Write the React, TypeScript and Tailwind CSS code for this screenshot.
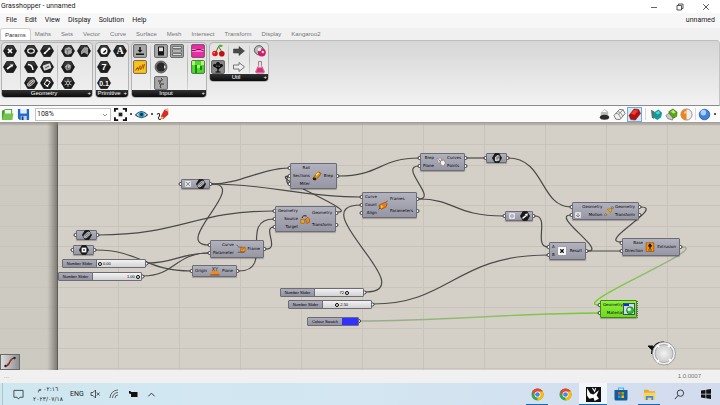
import React, { type ReactNode } from "react";

/* ---------- ribbon ---------- */

function Hex({ label, children }: { label: string; children: ReactNode }) {
  return (
    <button aria-label={label} className="block h-3 w-3.5">
      <svg viewBox="0 0 14 12" className="h-3 w-3.5">
        <path d="M3.8 .4H10.2L13.5 6L10.2 11.6H3.8L.5 6Z" fill="#1d1d1d" stroke="#000" strokeWidth=".7" strokeLinejoin="round" />
        <path d="M4 1H10L12 4.6H2Z" fill="#555" opacity=".45" />
        {children}
      </svg>
    </button>
  );
}

function Tile({ label, bg = "#a8a8a8", children }: { label: string; bg?: string; children: ReactNode }) {
  return (
    <button aria-label={label} className="block h-3 w-3.5">
      <svg viewBox="0 0 14 12" className="h-3 w-3.5 overflow-visible">
        <rect x=".6" y="-.4" width="12.8" height="12.8" rx="1" fill={bg} stroke="#4a4a4a" strokeWidth=".8" />
        {children}
      </svg>
    </button>
  );
}

function Plain({ label, children }: { label: string; children: ReactNode }) {
  return (
    <button aria-label={label} className="block h-3 w-3.5">
      <svg viewBox="0 0 14 12" className="h-3 w-3.5 overflow-visible">{children}</svg>
    </button>
  );
}

const Col = ({ children }: { children: ReactNode }) => <div className="flex flex-col gap-1">{children}</div>;
const Sep = () => <div className="mx-[3px] w-px bg-gradient-to-b from-[#d4d4d4] via-[#b4b4b4] to-[#d4d4d4]" />;

function Panel({ title, children }: { title: string; children: ReactNode }) {
  return (
    <section className="overflow-hidden rounded-sm border border-[#b4b4b4] bg-gradient-to-b from-[#e2e2e2] to-[#f0f0f0]">
      <div className="flex px-px pt-[2px] pb-px">{children}</div>
      <div className="relative h-[7px] bg-gradient-to-b from-[#333] to-[#0c0c0c] pr-[6px] text-center text-[6px] leading-[7px] text-white">
        {title}
        <span className="absolute right-px top-0">+</span>
      </div>
    </section>
  );
}

function Ribbon() {
  return (
    <div className="flex h-[66px] shrink-0 items-start gap-[2px] rounded-tr border-t border-r border-b border-t-[#bdbdbd] border-r-[#c4c4c4] border-b-[#8b8b8b] bg-gradient-to-b from-[#d6d6d6] to-[#f2f2f2] pt-px pl-px">
      <Panel title="Geometry">
        <Col>
          <Hex label="Point"><path d="M5 4L9 8M9 4L5 8" stroke="#fff" strokeWidth="1.6" /></Hex>
          <Hex label="Vector"><path d="M4 8L8 5" stroke="#fff" strokeWidth="1.7" /><path d="M7 3.4L10.4 3.6L9 6.6Z" fill="#fff" /></Hex>
        </Col>
        <Sep />
        <div className="flex gap-[2px]">
          <Col>
            <Hex label="Circle"><ellipse cx="7" cy="6" rx="3.3" ry="2.2" fill="none" stroke="#fff" strokeWidth="1.1" /></Hex>
            <Hex label="Circular Arc"><path d="M4 3.5C7 3.5 8.5 5.5 9 9" stroke="#fff" strokeWidth="1.5" fill="none" /></Hex>
            <Hex label="Curve"><ellipse cx="7" cy="6" rx="4.2" ry="2" transform="rotate(-40 7 6)" fill="#666" stroke="#ddd" strokeWidth=".8" /><path d="M5 8L9 4" stroke="#fff" strokeWidth=".7" /></Hex>
          </Col>
          <Col>
            <Hex label="Line"><path d="M4.5 8.5L9.5 3.5" stroke="#fff" strokeWidth="1.5" /><circle cx="4.7" cy="8.3" r="1" fill="#fff" /><circle cx="9.4" cy="3.6" r="1" fill="#fff" /></Hex>
            <Hex label="Plane"><path d="M3 5L9.5 2.8L11 6.8L4.5 9.2Z" fill="#ccc" stroke="#fff" strokeWidth=".7" /><path d="M5 7L9 5" stroke="#333" strokeWidth=".8" /></Hex>
            <Hex label="Rectangle"><path d="M4 7L7 3.2L10.3 5L7.4 9Z" fill="none" stroke="#fff" strokeWidth="1" /><circle cx="7" cy="3.2" r="1" fill="#fff" /><circle cx="7.4" cy="9" r="1" fill="#fff" /></Hex>
          </Col>
        </div>
        <Sep />
        <div className="flex gap-[2px]">
          <Col>
            <Hex label="Brep"><path d="M4 4L8 2.5L10.3 4V8L6.5 9.6L4 8Z" fill="#aaa" stroke="#ddd" strokeWidth=".6" /><path d="M4 4L6.5 5.4L10.3 4M6.5 5.4V9.6" stroke="#444" strokeWidth=".5" fill="none" /></Hex>
            <Hex label="Mesh"><path d="M3.5 6L7 2.6L10.3 5L9.2 8.4L6 9.8Z" fill="#bbb" /><path d="M3.5 6L9.2 8.4M7 2.6L6 9.8M10.3 5L6 9.8" stroke="#333" strokeWidth=".5" /></Hex>
            <Hex label="Group"><path d="M7 2.2V9.8M3.5 4L10.5 8M10.5 4L3.5 8" stroke="#bbb" strokeWidth=".9" /><circle cx="7" cy="6" r="1.6" fill="#1d1d1d" stroke="#ddd" strokeWidth=".7" /></Hex>
          </Col>
          <Hex label="Geometry"><path d="M4.5 9V6L7.5 2.6L10.6 2.9V9.3L7 7Z" fill="#999" stroke="#ddd" strokeWidth=".5" /></Hex>
        </div>
      </Panel>
      <Panel title="Primitive">
        <div className="flex gap-[2px]">
          <Col>
            <Hex label="Boolean"><circle cx="7" cy="6" r="3.5" fill="#fff" /><path d="M5.6 7.5A2.4 2.4 0 0 0 9 4.5Z" fill="#111" /></Hex>
            <Hex label="Integer"><text x="7" y="9.4" textAnchor="middle" fontSize="9" fontWeight="bold" fontFamily="Liberation Sans, sans-serif" fill="#fff">7</text></Hex>
            <Hex label="Number"><text x="7" y="8.7" textAnchor="middle" fontSize="7" fontWeight="bold" fontFamily="Liberation Sans, sans-serif" fill="#fff">0.1</text></Hex>
          </Col>
          <Hex label="Text"><text x="7" y="9.4" textAnchor="middle" fontSize="10" fontWeight="bold" fontFamily="Liberation Serif, serif" fill="#fff">A</text></Hex>
        </div>
      </Panel>
      <Panel title="Input">
        <Col>
          <Tile label="Button"><path d="M7 2V6" stroke="#111" strokeWidth="1.6" /><path d="M4.7 5H9.3L7 7.8Z" fill="#111" /><path d="M3 9.2H11" stroke="#111" strokeWidth="1.5" /></Tile>
          <Tile label="Graph" bg="#fcc419"><path d="M2.5 9.5L5 6M5 9.5L7.5 4.5M7.5 9L10 3.5M3 7.5L9 7M10 8L11.5 3" stroke="#a85b00" strokeWidth="1.1" /></Tile>
        </Col>
        <Sep />
        <div className="flex gap-[2px]">
          <Col>
            <Tile label="Toggle"><rect x="4" y="1.5" width="6" height="9" fill="#151515" /><rect x="5" y="2.5" width="4" height="3.7" fill="#ddd" /></Tile>
            <Plain label="Control Knob"><circle cx="7" cy="6" r="6" fill="#777" stroke="#333" strokeWidth=".6" /><circle cx="7" cy="6" r="4.5" fill="#292929" /><path d="M10 4L12 6L10 8Z" fill="#ddd" /></Plain>
            <Tile label="Digit Scroller"><path d="M7 1.5C11 3 4 5 6 7S5 9 7 11M4 4H7M7 7H10" stroke="#333" strokeWidth="1" fill="none" /></Tile>
          </Col>
          <Tile label="Value List"><path d="M2.5 2.5H11.5M2.5 6H11.5M2.5 9.5H11.5" stroke="#333" strokeWidth="2.5" /><path d="M3 2.5H11M3 6H11M3 9.5H11" stroke="#ddd" strokeWidth="1.4" /></Tile>
        </div>
        <Sep />
        <Col>
          <Tile label="Gradient" bg="#f02aa4"><rect x="1" y="4" width="12" height="3" fill="#f989ce" /><path d="M1 5.5H4L6 4.5H9L13 6" stroke="#5c0d3e" strokeWidth=".9" fill="none" /></Tile>
          <Tile label="Image Sampler" bg="#4ddb2e"><path d="M1 0H4V4H1ZM10 0H13V4H10ZM5 4H9V7H5Z" fill="#b5f56c" /><path d="M4 4H6V12H4ZM9 5H11V9H9Z" fill="#158a11" /></Tile>
        </Col>
      </Panel>
      <Panel title="Util">
        <Col>
          <Plain label="Cherry Picker"><path d="M5 7L7.5 1.5L11 7" stroke="#397d15" strokeWidth="1" fill="none" /><path d="M7 1.5C8-1 11-.5 12 1C10 2.5 8.5 2 7 1.5Z" fill="#4cae27" /><circle cx="4" cy="8.5" r="2.8" fill="#df1616" /><circle cx="10.8" cy="8.8" r="2.8" fill="#c40d0d" /><circle cx="3.2" cy="7.7" r=".8" fill="#ffb0b0" /></Plain>
          <Tile label="Param Viewer" bg="#8a8a8a"><path d="M7 11V5M7 7.5L3.5 5M7 8L10.5 5M4.5 11H9.5" stroke="#000" strokeWidth="1.2" /><circle cx="7" cy="3" r="2" fill="#111" /><circle cx="3.8" cy="4.5" r="1.7" fill="#111" /><circle cx="10.2" cy="4.5" r="1.7" fill="#111" /></Tile>
        </Col>
        <Sep />
        <Col>
          <Plain label="Data Output"><path d="M1.5 4H7V1.5L12.5 6L7 10.5V8H1.5Z" fill="#4a4a4a" stroke="#333" strokeWidth=".5" /></Plain>
          <Plain label="Data Input"><path d="M1.5 4H7V1.5L12.5 6L7 10.5V8H1.5Z" fill="#eee" stroke="#666" strokeWidth=".9" /></Plain>
        </Col>
        <Sep />
        <Col>
          <Plain label="Jump"><circle cx="6" cy="5.2" r="4.6" fill="#b9b9b9" stroke="#444" strokeWidth=".8" /><circle cx="8.8" cy="7.5" r="4" fill="#c92368" /><circle cx="6.5" cy="4.5" r="1.8" fill="#eee" /><circle cx="9.8" cy="7" r="1.2" fill="#ffd0df" /></Plain>
          <Plain label="Flask"><path d="M5.5 .5H8.5V4.5L11.5 11Q11 12 10 12H4Q3 12 2.5 11L5.5 4.5Z" fill="#f5dce6" stroke="#8d5068" strokeWidth=".7" /><path d="M4.8 6.5H9.2L11.2 11.4H2.9Z" fill="#df2c79" /></Plain>
        </Col>
      </Panel>
    </div>
  );
}

/* ---------- toolbar ---------- */

function ToolButton({ label, active = false, children }: { label: string; active?: boolean; children: ReactNode }) {
  return (
    <button
      aria-label={label}
      className={active ? "flex size-[15px] items-center justify-center border border-[#74a9d8] bg-[#d5e7f6]" : "flex size-[15px] items-center justify-center"}
    >
      <svg viewBox="0 0 14 14" className="size-[13px] shrink-0">{children}</svg>
    </button>
  );
}

const Dot = () => <span className="mx-[2px] size-[2px] shrink-0 rounded-full bg-[#222]" />;

function Toolbar() {
  return (
    <div className="flex h-4 shrink-0 items-center bg-[#fbfbfb]">
      <ToolButton label="Open"><path d="M1 3L5 1H12V13H1Z" fill="#3f9c35" /><path d="M4 2H11V7H4Z" fill="#f0f6ea" /><path d="M1 13L3 6H13.5L12 13Z" fill="#72c64b" /></ToolButton>
      <div className="ml-px"><ToolButton label="Save"><path d="M1 1H13V13H3L1 11Z" fill="#2165cf" /><rect x="3.5" y="1" width="7" height="5" fill="#e5edf8" /><rect x="4" y="8.5" width="6.5" height="4.5" fill="#c0d4f0" /><rect x="5" y="9" width="2" height="4" fill="#153e85" /></ToolButton></div>
      <div className="relative ml-1 h-[13px] w-[76px]">
        <select aria-label="Zoom" className="block h-[13px] w-full appearance-none border border-[#c4c4c4] bg-white py-0 pl-px font-[Roboto,sans-serif] text-[7px] leading-[11px] text-[#222]">
          <option>108%</option>
        </select>
        <svg viewBox="0 0 6 4" className="pointer-events-none absolute right-[3px] top-[5px] h-1 w-1.5"><path d="M1 1L3 3L5 1" stroke="#666" strokeWidth=".7" fill="none" /></svg>
      </div>
      <div className="ml-[2px]"><ToolButton label="Zoom extents"><path d="M1 4V1H4.500M9.500 1H13V4M13 10V13H9.500M4.500 13H1V10" stroke="#111" strokeWidth="2" fill="none" /><rect x="5" y="5" width="4" height="4" fill="#222" /></ToolButton></div>
      <Dot />
      <ToolButton label="Named views"><path d="M.5 7.5Q7 0 13.5 7.5Q7 13.5 .5 7.5Z" fill="#dcecf4" stroke="#244051" strokeWidth="1.1" /><circle cx="7" cy="7" r="3.3" fill="#3098c6" /><circle cx="7" cy="7" r="1.6" fill="#0b2c3d" /></ToolButton>
      <Dot />
      <ToolButton label="Sketch"><path d="M1 7C4 4 5 8 2.500 10.500C3 13.500 5.500 12.500 6 10.500" stroke="#222" strokeWidth="1.1" fill="none" /><path d="M5 9.500L9 2L13 .5L13.300 7L7.500 12Z" fill="#d72e20" /><path d="M9 2L13 .5L13 4Z" fill="#f3b3a4" /><path d="M5 12L6 8.500L8.500 10.500Z" fill="#f4bc5b" /></ToolButton>

      <div className="ml-auto flex items-center pr-[2px]">
        <ToolButton label="No preview"><path d="M3 5L7 1L11 4V8H3Z" fill="#bbb" /><path d="M4.5 4L7 2L9.5 4.5Z" fill="#fff" /><ellipse cx="7" cy="10" rx="5" ry="2.7" fill="#2b2b2b" /></ToolButton>
        <ToolButton label="Wireframe preview"><path d="M1 8L7 1.500L11 2L13 6L7.500 12.500L3 12Z" fill="#f2f2f2" stroke="#666" strokeWidth=".9" /><path d="M3 5.800L6 6.500L8.500 11.300M6 6.500L11 2M4.800 3.900L8 4.800L10.500 9" stroke="#777" strokeWidth=".8" fill="none" /></ToolButton>
        <ToolButton label="Shaded preview" active><path d="M1 8L6.500 1L11.500 1.500L13.500 6L8 13L3 12.500Z" fill="#b30f0f" stroke="#6d0808" strokeWidth=".5" /><path d="M3 6L7 2L11 3L7 7.500Z" fill="#ed3d35" /></ToolButton>
        <div className="mx-[3px] h-3 w-px bg-[#d8d8d8]" />
        <ToolButton label="Document preview"><path d="M1 2L5 4L4 12L2 10Z" fill="#5c6e6d" /><path d="M4 5L9 1.5L13 5L12 10L8 13L4 10.5Z" fill="#119a9b" /><path d="M6 5L9 3L11 5.5L8 7Z" fill="#5cd2cf" /></ToolButton>
        <ToolButton label="Selected preview"><path d="M1 8L5 5L9 8L8 13L3 11.5Z" fill="#ccc" stroke="#666" strokeWidth=".7" /><path d="M4 4L8.5 1L13 4.5L12.5 9L9 11L5 6.5Z" fill="#58a80f" stroke="#285809" strokeWidth=".6" /><path d="M6 4L9 2L11.5 5L9 6Z" fill="#bfe677" /></ToolButton>
        <ToolButton label="Preview quality"><circle cx="7" cy="7" r="6" fill="#eee" stroke="#777" strokeWidth=".8" /><path d="M7 1A6 6 0 0 0 7 13Z" fill="#ed8417" /><path d="M7 3A3.5 3.5 0 0 0 4 6H7Z" fill="#ffd19a" /></ToolButton>
        <div className="mx-px h-3 w-px bg-[#d8d8d8]" />
        <ToolButton label="Preview mesh"><circle cx="7" cy="7" r="5.7" fill="#3c82de" stroke="#1d4583" strokeWidth=".7" /><circle cx="5.8" cy="5" r="3" fill="#a9d0ff" /></ToolButton>
        <Dot />
      </div>
    </div>
  );
}

/* ---------- node glyphs ---------- */

type GlyphName = "curve" | "point" | "vector" | "brep" | "pipe" | "orient" | "frame" | "plane" | "frames" | "section" | "multiply" | "move" | "extrude" | "preview";

const dark = <path d="M3.5 .7H8.5L11.6 6L8.5 11.3H3.5L.4 6Z" fill="#1a1a1a" stroke="#000" strokeWidth=".6" />;

const glyphs: Record<GlyphName, ReactNode> = {
  curve: <>{dark}<ellipse cx="6" cy="6" rx="4.6" ry="2.2" transform="rotate(-42 6 6)" fill="#777" stroke="#ddd" strokeWidth=".8" /><path d="M3.5 8.5L8.5 4" stroke="#eee" strokeWidth=".8" /></>,
  point: <>{dark}<rect x="3.2" y="3.2" width="5.6" height="5.6" fill="#fff" /><path d="M4.6 4.6L7.4 7.4M7.4 4.6L4.6 7.4" stroke="#555" strokeWidth=".9" /></>,
  vector: <>{dark}<path d="M3 9L7 5.5" stroke="#fff" strokeWidth="1.8" /><path d="M5.7 3.5L9.5 3L8.6 7Z" fill="#fff" /></>,
  brep: <>{dark}<path d="M3.5 9.5V5L6.5 2.5L9 3V9L6 10Z" fill="#ccc" /><path d="M6 4V8M8 4L7 7" stroke="#333" strokeWidth=".7" /></>,
  pipe: <><path d="M1 9L4 5L8 1L11 3L8 7L4 11Z" fill="#e8920c" stroke="#6d3900" strokeWidth=".7" /><path d="M5 5L8 2" stroke="#ffe05a" strokeWidth="1.6" /><ellipse cx="3" cy="9.5" rx="2" ry="1.6" fill="#2b1a08" /></>,
  orient: <><rect x="1" y="6.5" width="4.5" height="4.5" fill="#f0a51c" stroke="#87500a" strokeWidth=".6" /><path d="M6.5 6L9.5 4L11.5 6V10L8 11.4Z" fill="#f0841c" stroke="#87400a" strokeWidth=".6" /><path d="M2.5 5C3 2 5 1.5 8 2.5" stroke="#222" strokeWidth="1.2" fill="none" /></>,
  frame: <><path d="M1 1C2 3 3 4 7 4M2 10H10" stroke="#555" strokeWidth="1" fill="none" /><path d="M6 4H11V9H5Z" fill="#f09a1c" stroke="#904c08" strokeWidth=".7" /><path d="M7 7L9 5" stroke="#d8231a" strokeWidth="1" /></>,
  plane: <><text x="6" y="5.5" textAnchor="middle" fontSize="6" fontFamily="Liberation Sans, sans-serif" fill="#222">XY</text><path d="M2.5 6H9.5L11.6 10H.4Z" fill="#f58a12" /><path d="M.4 10.7H11.6" stroke="#8c2f0c" strokeWidth="1" /></>,
  frames: <><path d="M1.500 6L9 2.500L11 4.500L9.500 8.500L4 11L1.500 9Z" fill="#ed7b09" stroke="#8c3d00" strokeWidth=".7" /><path d="M3.500 6L6.500 8L4 10Z" fill="#ffd23a" /><path d="M10 2.500L11.500 .7M.5 11.500L2.500 9.500" stroke="#333" strokeWidth=".8" /></>,
  section: <><path d="M1 2L6 1L7 5L3 8Z" fill="#e7d7d7" stroke="#777" strokeWidth=".6" /><path d="M5 5L9 3.5L11.5 7L9 11L5.5 9Z" fill="#f4f4f4" stroke="#666" strokeWidth=".7" /><path d="M3 3L6 6" stroke="#c4454a" strokeWidth="1" /></>,
  multiply: <><rect x="1" y="1" width="10" height="10" fill="#fff" stroke="#888" strokeWidth=".6" /><path d="M4 4L8 8M8 4L4 8" stroke="#111" strokeWidth="1.6" /></>,
  move: <><path d="M1 11L5 7" stroke="#eba022" strokeWidth="2" /><path d="M4 4L9.5 3L8 8Z" fill="#f6aa18" stroke="#845108" strokeWidth=".5" /><circle cx="10" cy="2" r="1.3" fill="#aaa" stroke="#444" strokeWidth=".5" /><circle cx="2" cy="10.5" r="1.3" fill="#aaa" stroke="#444" strokeWidth=".5" /></>,
  extrude: <><rect x="1.3" y="1" width="9.4" height="10.4" fill="#f5900e" stroke="#8c4400" strokeWidth=".7" /><path d="M6 2.5V8" stroke="#111" strokeWidth="1.6" /><path d="M3.7 5L6 2L8.3 5ZM3.7 9.5H8.3" fill="#111" stroke="#111" strokeWidth=".6" /></>,
  preview: <><rect x=".5" y=".5" width="11" height="11" fill="#c9dcea" stroke="#345" strokeWidth=".9" /><path d="M1 1H6V3H1Z" fill="#1b28d4" /><circle cx="7" cy="7.3" r="3.5" fill="#2fc03c" stroke="#14541b" strokeWidth=".6" /><circle cx="6.2" cy="6.4" r="1.7" fill="#dcffdc" /></>,
};

function Glyph({ name, large = false }: { name: GlyphName; large?: boolean }) {
  return <svg viewBox="0 0 12 12" className={large ? "size-3 shrink-0" : "size-[10px] shrink-0"}>{glyphs[name]}</svg>;
}

/* ---------- canvas data ---------- */

type NodeSpec = { x: number; y: number; w: number; h: number; glyph: GlyphName; ins?: string[]; outs?: string[]; tag?: string; green?: boolean };

const nodes: NodeSpec[] = [
  { x: 181, y: 57, w: 29, h: 10, glyph: "curve", tag: "M1 1L5 5M5 1L1 5" },
  { x: 76, y: 108, w: 21, h: 10, glyph: "curve" },
  { x: 73, y: 123, w: 21, h: 10, glyph: "point" },
  { x: 486, y: 31, w: 21, h: 10, glyph: "brep" },
  { x: 505, y: 89, w: 28, h: 10, glyph: "vector", tag: "M3 1V5M1 3H2M4 3H5" },
  { x: 210, y: 118, w: 54, h: 18, glyph: "frame", ins: ["Curve", "Parameter"], outs: ["Frame"] },
  { x: 192, y: 143, w: 45, h: 12, glyph: "plane", ins: ["Origin"], outs: ["Plane"] },
  { x: 275, y: 84, w: 61, h: 26, glyph: "orient", ins: ["Geometry", "Source", "Target"], outs: ["Geometry", "Transform"] },
  { x: 290, y: 41, w: 47, h: 26, glyph: "pipe", ins: ["Rail", "Sections", "Miter"], outs: ["Brep"] },
  { x: 362, y: 70, w: 55, h: 26, glyph: "frames", ins: ["Curve", "Count", "Align"], outs: ["Frames", "Parameters"] },
  { x: 420, y: 31, w: 45, h: 18, glyph: "section", ins: ["Brep", "Plane"], outs: ["Curves", "Points"] },
  { x: 549, y: 120, w: 37, h: 18, glyph: "multiply", ins: ["A", "B"], outs: ["Result"] },
  { x: 572, y: 80, w: 67, h: 18, glyph: "move", ins: ["Geometry", "Motion"], outs: ["Geometry", "Transform"], tag: "M3 1V5M1 3L3 5L5 3" },
  { x: 622, y: 116, w: 58, h: 18, glyph: "extrude", ins: ["Base", "Direction"], outs: ["Extrusion"] },
  { x: 600, y: 178, w: 37, h: 18, glyph: "preview", ins: ["Geometry", "Material"], green: true },
];

const wires = [
  "M212 62C240 62 262 46 289 46",
  "M212 62C270 62 300 75 361 75",
  "M212 62C250 62 170 123 209 123",
  "M99 113C180 113 195 89 274 89",
  "M96 128C140 128 145 149 191 149",
  "M147 141C175 141 180 131 209 131",
  "M143 154C175 154 175 131 209 131",
  "M239 149C275 149 238 97 274 97",
  "M266 127C280 127 262 105 274 105",
  "M338 90C360 90 266 54 289 54",
  "M289 54C286 55 286 61 289 62",
  "M339 54C380 54 380 36 419 36",
  "M419 77C438 77 398 44 419 44",
  "M419 77C455 77 455 94 503 94",
  "M365 170C425 170 300 83 361 83",
  "M373 182C450 182 455 133 548 133",
  "M467 36H485",
  "M508 36C545 36 540 85 571 85",
  "M535 94C550 94 533 125 548 125",
  "M588 129C607 129 550 93 571 93",
  "M588 129H621",
  "M641 85C665 85 597 120 621 120",
];

const gridColumns = Array.from({ length: 40 }, (_, i) => 118 + i * 61);
const gridRows = Array.from({ length: 60 }, (_, i) => Math.round(2 + i * 20.35));

type SliderSpec = { x: number; y: number; value: string; percent: number; side: "left" | "right" };

const sliders: SliderSpec[] = [
  { x: 62, y: 137, value: "0.00", percent: 2, side: "right" },
  { x: 58, y: 150, value: "1.00", percent: 97, side: "left" },
  { x: 280, y: 166, value: "72", percent: 68, side: "left" },
  { x: 288, y: 178, value: "2.50", percent: 28, side: "right" },
];

// Port offsets along a node's side, evenly spread over its height
const spread = (count: number, h: number) => Array.from({ length: count }, (_, i) => 1 + ((h - 2) * (i + 0.5)) / count);

function NodeBox({ node }: { node: NodeSpec }) {
  const tone = node.green
    ? "border-[#3d8a12] from-[#8df13c] to-[#6fd820]"
    : "border-[#6c6c76] from-[#b2b2be] to-[#9696a4]";
  const tag = node.tag && (
    <svg viewBox="0 0 6 6" className="size-[6px] shrink-0">
      <rect x=".3" y=".3" width="5.4" height="5.4" rx=".8" fill="#e2e2e6" stroke="#f4f4f6" strokeWidth=".6" />
      <path d={node.tag} stroke="#777" strokeWidth=".8" fill="none" />
    </svg>
  );
  return (
    <div
      className={`absolute flex items-stretch rounded-[1px] border bg-gradient-to-b text-[4px] leading-[4px] text-black shadow-[0_1px_1px_rgba(0,0,0,0.25)] ${tone}`}
      style={{ left: node.x, top: node.y, width: node.w, height: node.h }}
    >
      {node.ins ? (
        <div className={node.green ? "flex flex-1 justify-between pr-px pl-[2px]" : "flex flex-1 justify-between pr-[3px] pl-[2px]"}>
          {tag && <div className="flex items-end pb-px">{tag}</div>}
          <div className="flex flex-col">
            {node.ins.map((name) => <span key={name} className="flex flex-1 items-center justify-end">{name}</span>)}
          </div>
          <div className="flex items-center"><Glyph name={node.glyph} large={node.green} /></div>
          {node.outs && (
            <div className="flex flex-col">
              {node.outs.map((name) => <span key={name} className="flex flex-1 items-center">{name}</span>)}
            </div>
          )}
        </div>
      ) : (
        <div className="flex flex-1 items-center justify-around">{tag}<Glyph name={node.glyph} /></div>
      )}
    </div>
  );
}

function NumberSlider({ slider, id }: { slider: SliderSpec; id: string }) {
  const thumb = 2 + (44 * slider.percent) / 100;
  return (
    <div
      className="absolute flex h-[9px] w-[84px] overflow-hidden rounded-[1px] border border-[#6c6c76] text-[4px] leading-[7px] text-black"
      style={{ left: slider.x, top: slider.y }}
    >
      <label htmlFor={id} className="w-[34px] shrink-0 border-r border-[#6c6c76] bg-gradient-to-b from-[#adadba] to-[#9292a0] text-center">Number Slider</label>
      <div className="relative flex-1 bg-gradient-to-b from-[#f2f2f2] to-[#d2d2d2]">
        <input
          id={id}
          type="range"
          defaultValue={slider.percent}
          className="block h-[7px] w-full appearance-none bg-transparent [&::-webkit-slider-thumb]:size-1 [&::-webkit-slider-thumb]:appearance-none [&::-webkit-slider-thumb]:rounded-full [&::-webkit-slider-thumb]:border [&::-webkit-slider-thumb]:border-solid [&::-webkit-slider-thumb]:border-black [&::-webkit-slider-thumb]:bg-white"
        />
        <output htmlFor={id} className="pointer-events-none absolute top-0" style={slider.side === "right" ? { left: thumb + 3 } : { right: 48 - thumb + 3 }}>
          {slider.value}
        </output>
      </div>
    </div>
  );
}

function Canvas() {
  const grips = [
    ...nodes.flatMap((n) => [
      ...spread(n.ins?.length ?? 1, n.h).map((dy) => ({ x: n.x - 0.5, y: n.y + dy })),
      ...(n.green ? [] : spread(n.outs?.length ?? 1, n.h).map((dy) => ({ x: n.x + n.w + 0.5, y: n.y + dy }))),
    ]),
    ...sliders.map((s) => ({ x: s.x + 84.5, y: s.y + 4.5 })),
    { x: 359, y: 199 },
  ];
  return (
    <main className="relative min-h-0 flex-1 overflow-hidden bg-[#d4d0c8] font-['DejaVu_Sans',sans-serif]">
      <svg className="absolute inset-0 h-full w-full" fill="none">
        <defs>
          <linearGradient id="edge"><stop offset="0" stopColor="#77756f" stopOpacity="0" /><stop offset="1" stopColor="#6a6862" stopOpacity=".8" /></linearGradient>
          <linearGradient id="top" x2="0" y2="1"><stop offset="0" stopColor="#8c8a84" stopOpacity=".8" /><stop offset="1" stopColor="#8c8a84" stopOpacity="0" /></linearGradient>
          <linearGradient id="out" x1="1" x2="0"><stop offset="0" stopColor="#a5a89c" /><stop offset=".6" stopColor="#83c552" /><stop offset="1" stopColor="#6fd11f" /></linearGradient>
          <linearGradient id="paint" gradientUnits="userSpaceOnUse" x1="360" x2="599" y1="0" y2="0"><stop offset="0" stopColor="#9fa596" /><stop offset=".5" stopColor="#90bf6c" /><stop offset="1" stopColor="#72cc28" /></linearGradient>
          <radialGradient id="ball"><stop offset="0" stopColor="#f2f2f2" /><stop offset="1" stopColor="#cdcdcd" /></radialGradient>
        </defs>
        <g fill="#c8c4bb">
          {gridColumns.map((x) => <rect key={x} x={x} width="1" height="100%" />)}
          {gridRows.map((y) => <rect key={y} y={y} width="100%" height="1" />)}
        </g>
        <rect width="57" height="100%" fill="#c6c3ba" fillOpacity=".5" />
        <rect x="47" width="10" height="100%" fill="url(#edge)" />
        <rect x="57" width="1" height="100%" fill="#5f5e59" />
        <rect width="100%" height="4" fill="url(#top)" />
        <g stroke="#4b4a48" strokeWidth="1.2">{wires.map((d) => <path key={d} d={d} />)}</g>
        <path d="M682 125C712 125 568 183 599 183" stroke="url(#out)" strokeWidth="1.4" />
        <path d="M360 199C440 199 520 191 599 191" stroke="url(#paint)" strokeWidth="1.4" />
        <g fill="#fff" stroke="#111" strokeWidth=".8">{grips.map((g) => <circle key={`${g.x}-${g.y}`} cx={g.x} cy={g.y} r="1.5" />)}</g>
        <path d="M637.500 179V196" stroke="#666" strokeWidth="1" strokeDasharray="1 1" />
        <path d="M648 224L653 224L654 230Z" fill="#111" stroke="#111" strokeWidth="1" />
        <path d="M652 232C652 225 657 220 664 220.500" stroke="#111" strokeWidth="2" />
        <circle cx="664" cy="231.500" r="11.500" fill="#f0f0f0" stroke="#8c8c8c" strokeWidth=".8" />
        <circle cx="664" cy="231.500" r="9" fill="url(#ball)" stroke="#aaa" strokeWidth="1" />
        <path d="M657 223L659 225M670 223L668 225M657 240L659 238M671 239L669 237" stroke="#fff" strokeWidth="2" />
      </svg>

      {nodes.map((n) => <NodeBox key={`${n.x}-${n.y}`} node={n} />)}

      <div className="font-['Liberation_Sans',sans-serif] text-black">
        {sliders.map((s, i) => <NumberSlider key={s.x} slider={s} id={`slider-${i}`} />)}
        <div className="absolute left-[307px] top-[195px] flex h-[9px] w-[52px] overflow-hidden rounded-[1px] border border-[#6c6c76] text-[4px] leading-[7px]">
          <label htmlFor="swatch" className="flex-1 bg-gradient-to-b from-[#adadba] to-[#9292a0] text-center">Colour Swatch</label>
          <input id="swatch" type="color" defaultValue="#3232ff" className="block h-[7px] w-4 appearance-none [&::-webkit-color-swatch]:border-0 [&::-webkit-color-swatch]:p-0 [&::-webkit-color-swatch-wrapper]:p-0" />
        </div>
      </div>

      <button aria-label="Graph type" className="absolute bottom-0 left-0 flex h-4 w-5 items-center justify-center border border-[#6b6b6b] bg-gradient-to-r from-[#dedede] to-[#909090]">
        <svg viewBox="0 0 14 12" className="h-3 w-3.5"><path d="M2 10C8 11 5 2 12 2" stroke="#333" strokeWidth="1.2" fill="none" /><path d="M4 9.500L6 7M7 5L9 3" stroke="#d31f1f" strokeWidth="1.6" /><circle cx="2.500" cy="10" r="1.200" fill="#222" /><circle cx="11.500" cy="2" r="1.200" fill="#222" /></svg>
      </button>
    </main>
  );
}

/* ---------- taskbar ---------- */

function Chrome() {
  return (
    <svg viewBox="0 0 14 14" className="size-[13px]">
      <circle cx="7" cy="7" r="6.500" fill="#34a853" />
      <path d="M7 7L1.370 3.750A6.500 6.500 0 0 1 12.630 3.750Z" fill="#ea4335" />
      <path d="M7 7L12.630 3.750A6.500 6.500 0 0 1 7 13.500Z" fill="#fbbc05" />
      <path d="M7 3.750H12.630L9.500 8.500Z" fill="#fbbc05" />
      <path d="M1.370 3.750L4.200 8.600L7 3.750Z" fill="#ea4335" />
      <circle cx="7" cy="7" r="3.200" fill="#fff" /><circle cx="7" cy="7" r="2.500" fill="#4285f4" />
    </svg>
  );
}

function Task({ label, open = false, active = false, children }: { label: string; open?: boolean; active?: boolean; children: ReactNode }) {
  return (
    <button aria-label={label} className={active ? "relative flex h-full w-7 items-center justify-center bg-white/70" : "relative flex h-full w-7 items-center justify-center"}>
      {children}
      {open && <span className={active ? "absolute inset-x-0 bottom-0 h-px bg-[#0f6cbd]" : "absolute inset-x-[3px] bottom-0 h-px bg-[#0f6cbd]"} />}
    </button>
  );
}

function Taskbar() {
  return (
    <footer className="flex h-[22px] shrink-0 items-center bg-gradient-to-r from-[#cfe7f0] via-[#d3e6f1] to-[#d3dbee] text-[#222]">
      <div className="ml-[2px] h-full w-px bg-[#aec4cf]" />
      <button aria-label="Notifications" className="ml-[10px]">
        <svg viewBox="0 0 12 12" className="size-[11px]"><path d="M1 1.500H11V9H7.500L6 11L4.500 9H1Z" fill="none" stroke="#333" strokeWidth=".9" /></svg>
      </button>
      <button dir="rtl" className="ml-2 w-8 text-center font-['DejaVu_Sans',sans-serif] text-[6px] leading-[10px]">
        <span className="block">٠٢:١٦ م</span>
        <span className="block">٢٠٢٣/٠٧/١٨</span>
      </button>
      <button className="ml-[6px] w-[13px] font-[Roboto,sans-serif] text-[7px]">ENG</button>
      <div className="ml-[7px] flex items-center gap-[9px]">
        <button aria-label="Volume"><svg viewBox="0 0 10 10" className="size-[10px]"><path d="M1 3.500H3L5.500 1V9L3 6.500H1ZM6.800 3.500L9.500 6.500M9.500 3.500L6.800 6.500" fill="none" stroke="#333" strokeWidth=".8" /></svg></button>
        <button aria-label="Network"><svg viewBox="0 0 10 10" className="size-[10px]"><path d="M1 9A8 8 0 0 1 9 1M3.500 9A5.500 5.500 0 0 1 9 3.500M6 9A3 3 0 0 1 9 6" fill="none" stroke="#444" strokeWidth=".8" /></svg></button>
        <button aria-label="Battery"><svg viewBox="0 0 10 10" className="size-[10px]"><path d="M2.500 3H9.500V8H3V5L1 4.500V2H3Z" fill="#111" /></svg></button>
        <button aria-label="Hidden icons"><svg viewBox="0 0 10 10" className="size-[9px]"><path d="M1.500 7L5 3.500L8.500 7" fill="none" stroke="#222" strokeWidth="1" /></svg></button>
      </div>
      <div className="ml-auto flex h-full items-center">
        <Task label="Chrome" open><Chrome /></Task>
        <Task label="Chrome profile"><Chrome /></Task>
        <Task label="Rhino" open active>
          <svg viewBox="0 0 14 14" className="size-[15px]"><rect width="14" height="14" fill="#111" /><path d="M1 1L4 6L7 7L12 3L10 8L12 11L8 13L7 10L3 11L1 8Z" fill="#fff" /><path d="M6 1L8 4L9 1M3 8L6 9" stroke="#fff" strokeWidth="1" fill="none" /></svg>
        </Task>
        <Task label="Store">
          <svg viewBox="0 0 14 14" className="size-[14px]"><path d="M4.500 3V1H9.500V3" stroke="#3bb5ef" strokeWidth="1.200" fill="none" /><path d="M.5 3H13.500V12Q13.500 13.500 12 13.500H2Q.5 13.500 .5 12Z" fill="#155a9c" /><path d="M4 5H6.600V7.600H4Z" fill="#f25022" /><path d="M7.400 5H10V7.600H7.400Z" fill="#7fba00" /><path d="M4 8.400H6.600V11H4Z" fill="#00a4ef" /><path d="M7.400 8.400H10V11H7.400Z" fill="#ffb900" /></svg>
        </Task>
        <Task label="File Explorer" open>
          <svg viewBox="0 0 14 14" className="size-[13px]"><path d="M1 2H5.500L7 3.500H13V12H1Z" fill="#e9a92c" /><path d="M1 5H13V12H1Z" fill="#fbd45e" /><path d="M3 13V8.500H11V13H9V10.500H5V13Z" fill="#3a8fdc" /></svg>
        </Task>
        <button aria-label="Search" className="ml-[11px]"><svg viewBox="0 0 12 12" className="size-[11px]"><circle cx="7" cy="4.500" r="3.500" fill="none" stroke="#222" strokeWidth=".9" /><path d="M4.500 7L1 11" stroke="#222" strokeWidth="1" /></svg></button>
        <button aria-label="Start" className="mr-[9px] ml-4"><svg viewBox="0 0 10 10" className="size-[10px]"><path d="M0 1.500L4.500 .9V4.700H0ZM5.200 .8L10 0V4.700H5.200ZM0 5.400H4.500V9.200L0 8.500ZM5.200 5.400H10V10L5.200 9.300Z" fill="#111" /></svg></button>
      </div>
    </footer>
  );
}

/* ---------- window ---------- */

const menus = ["File", "Edit", "View", "Display", "Solution", "Help"];
const tabs = ["Maths", "Sets", "Vector", "Curve", "Surface", "Mesh", "Intersect", "Transform", "Display", "Kangaroo2"];

export default function App() {
  return (
    <div className="flex h-screen flex-col overflow-hidden bg-[#f0f0f0] font-['Liberation_Sans',sans-serif] text-[#222]">
      <header className="flex h-[13px] shrink-0 items-center bg-white pl-px font-[Roboto,sans-serif] text-[7px] leading-[13px]">
        <h1>Grasshopper - unnamed</h1>
        <div className="ml-auto flex items-center gap-[18px] pr-[10px]">
          <button aria-label="Minimize"><svg viewBox="0 0 8 8" className="size-2"><path d="M1 4.500H7" stroke="#555" strokeWidth=".9" /></svg></button>
          <button aria-label="Restore"><svg viewBox="0 0 8 8" className="size-2"><path d="M1 2.500H5.500V7H1ZM2.500 2.500V1H7V5.500H5.500" stroke="#444" strokeWidth=".9" fill="none" /></svg></button>
          <button aria-label="Close"><svg viewBox="0 0 8 8" className="size-2"><path d="M1.200 1.200L6.800 6.800M6.800 1.200L1.200 6.800" stroke="#444" strokeWidth=".9" /></svg></button>
        </div>
      </header>
      <nav className="flex h-[15px] shrink-0 items-center gap-2 bg-[#f7f7f7] pr-[5px] pl-[6px] font-[Roboto,sans-serif] text-[7px] leading-[15px]">
        {menus.map((m) => <button key={m}>{m}</button>)}
        <span className="ml-auto">unnamed</span>
      </nav>
      <nav className="flex h-3 shrink-0 items-center gap-[10px] text-[6px] leading-3 text-[#777]">
        <button className="-mr-[6px] h-full rounded-t-[3px] border border-b-0 border-[#d0d0d0] bg-white px-1 leading-[10px] text-[#333]">Params</button>
        {tabs.map((t) => <button key={t}>{t}</button>)}
      </nav>
      <Ribbon />
      <Toolbar />
      <Canvas />
      <div className="flex h-[13px] shrink-0 items-center justify-between bg-[#f0f0f0] pr-[19px] pl-1 text-[6px] leading-[13px] text-[#777]">
        <span>...</span>
        <span>1.0.0007</span>
      </div>
      <Taskbar />
    </div>
  );
}
